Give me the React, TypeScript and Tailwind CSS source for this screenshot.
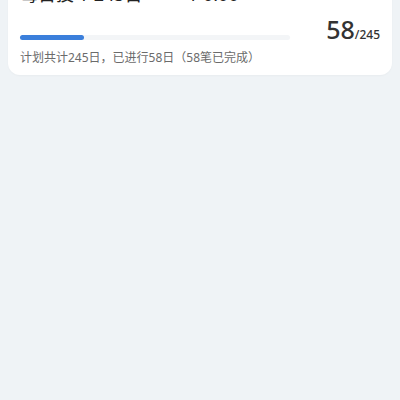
import React from "react";

export default function App() {
  const done = 58;
  const total = 245;
  const pct = (done / total) * 100;
  return (
    <div
      className="w-[400px] h-[400px] overflow-hidden bg-[#eff3f6]"
      style={{ fontFamily: '"Noto Sans", "Noto Sans CJK SC", sans-serif' }}
    >
      <div className="mx-2 -mt-[18px] rounded-xl bg-white px-3 pb-[8px] shadow-[0_1px_2px_rgba(0,0,0,0.03)]">
        <div className="flex h-[24px] items-center text-[18px] leading-[24px] text-[#222]">
          <span className="w-[168px]">每日投 ¥ 245日</span>
          <span>¥ 0.00</span>
        </div>
        <div className="flex pt-[8px]">
          <div className="flex flex-col">
            <div className="mt-[21px] h-[5px] w-[270px] rounded-full bg-[#f3f5f7]">
              <div
                className="h-full rounded-full bg-[#3b7fdb]"
                style={{ width: `${pct}%` }}
              />
            </div>
            <div className="mt-[9px] text-[12px] leading-[18px] text-[#6b6b6b]">
              计划共计245日，已进行58日（58笔已完成）
            </div>
          </div>
          <div className="ml-auto flex items-baseline self-start text-[#333]">
            <span className="text-[25px] font-medium leading-[30px]">58</span>
            <span className="text-[12px] font-medium leading-[30px]">/245</span>
          </div>
        </div>
      </div>
    </div>
  );
}
